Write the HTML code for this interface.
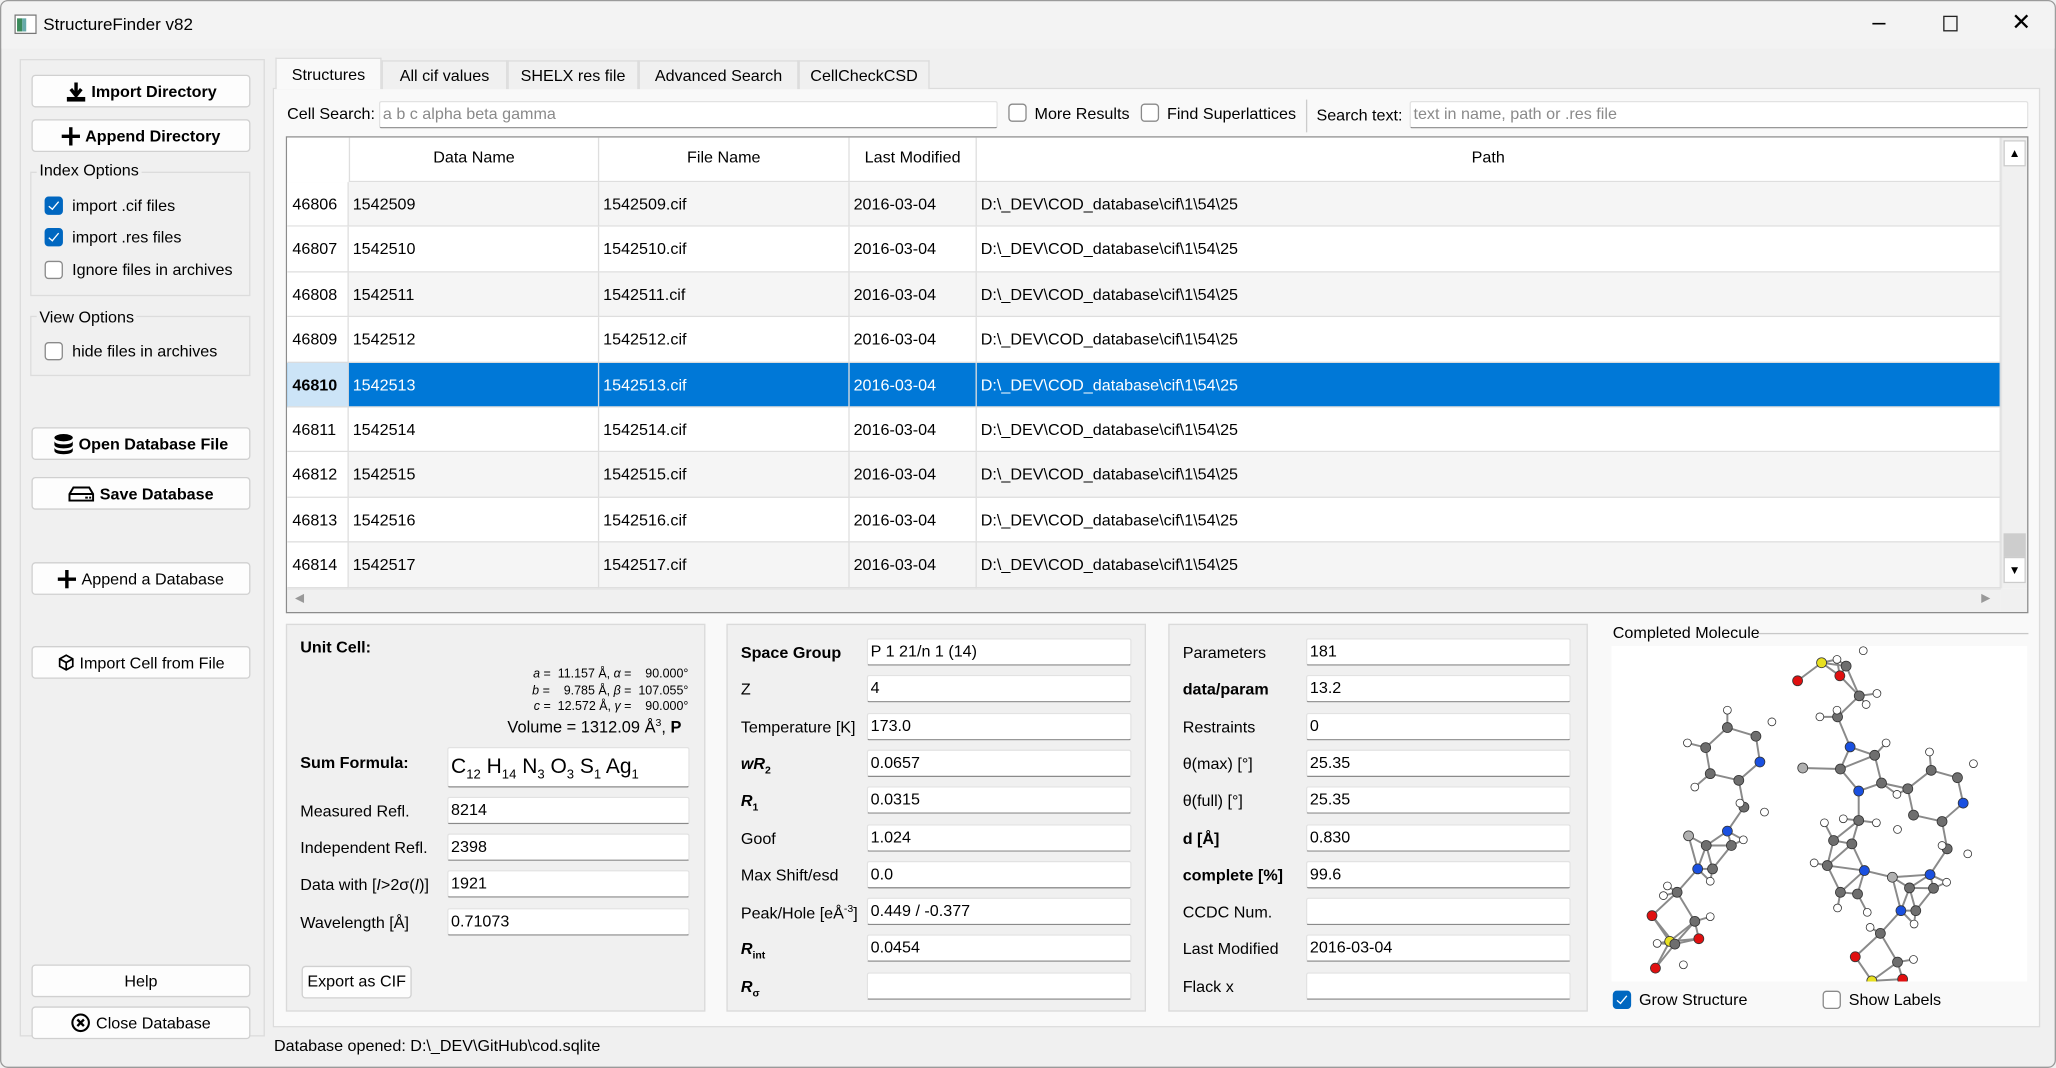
<!DOCTYPE html>
<html><head><meta charset="utf-8">
<style>
*{box-sizing:border-box;margin:0;padding:0}
html,body{width:2056px;height:1068px;overflow:hidden;background:#f0f0f0}
#w{position:absolute;left:0;top:0;width:1568px;height:815px;transform:scale(1.3112,1.3104);transform-origin:0 0;font-family:"Liberation Sans","DejaVu Sans",sans-serif;font-size:12.3px;color:#000;background:#f0f0f0;border:1px solid #9a9a9a;border-radius:6px;overflow:hidden}
.a{position:absolute}
.title{left:0;top:0;width:1568px;height:36px;background:#f3f3f3}
.btn{position:absolute;left:23px;width:167px;height:25px;background:#fdfdfd;border:1px solid #d0d0d0;border-radius:3px;display:flex;align-items:center;justify-content:center;gap:4px;font-size:12.3px}
.btn b{font-weight:bold}
.grp{position:absolute;border:1px solid #dcdcdc}
.gt{position:absolute;background:#f0f0f0;padding:0 2px;font-size:12.3px}
.cb{position:absolute;width:14px;height:14px;border:1px solid #8a8a8a;border-radius:3px;background:#fff}
.cb.on{background:#0067c0;border-color:#0067c0}
.cb.on:after{content:"";position:absolute;left:4px;top:1px;width:3px;height:7px;border:solid #fff;border-width:0 1px 1px 0;transform:rotate(40deg)}
.lbl{position:absolute;white-space:nowrap}
.tab{position:absolute;top:45px;height:22px;border:1px solid #dcdcdc;border-bottom:none;background:#f0f0f0;display:flex;align-items:center;justify-content:center}
.inp{position:absolute;background:#fff;border:1px solid #e2e2e2;border-bottom:1px solid #8a8a8a;border-radius:2px;height:21px;padding-left:2px;line-height:19px;white-space:nowrap}
.ph{color:#8a8a8a}
.row{position:absolute;left:0;width:1307px;height:34.4px}
.cell{position:absolute;top:0;height:100%;line-height:34px;white-space:nowrap;border-right:1px solid #dedede;border-bottom:1px solid #dedede;padding-left:3px}
.box{position:absolute;border:1px solid #dadada;background:#f0f0f0}
.fl{position:absolute;white-space:nowrap}
</style></head><body>
<div id="w">
<div class="a title"></div>
<svg class="a" style="left:10px;top:10px" width="17" height="15"><rect x="0.5" y="0.5" width="16" height="14" fill="#fff" stroke="#777"/><rect x="2" y="3" width="4" height="10" fill="#3a8a5a"/><rect x="6" y="3" width="3" height="10" fill="#6aa"/></svg>
<div class="lbl" style="left:32px;top:10px;font-size:13px">StructureFinder v82</div>
<div class="lbl" style="left:1427px;top:6px;font-size:18px">–</div>
<div class="a" style="left:1481px;top:11px;width:11px;height:12px;border:1px solid #222"></div>
<div class="lbl" style="left:1533px;top:6px;font-size:18px">✕</div>

<div class="a" style="left:14px;top:44px;width:187px;height:746px;border:1px solid #dcdcdc"></div>
<div class="btn" style="top:56px"><svg width="16" height="16"><path d="M8 1v9M4 6l4 5 4-5" stroke="#000" stroke-width="2.6" fill="none"/><rect x="1" y="12" width="14" height="3.5" fill="#000"/></svg><b>Import Directory</b></div>
<div class="btn" style="top:90px"><svg width="14" height="14"><path d="M7 0v14M0 7h14" stroke="#000" stroke-width="2.6"/></svg><b>Append Directory</b></div>
<div class="grp" style="left:22px;top:130px;width:168px;height:95px"></div>
<div class="gt" style="left:27px;top:122px">Index Options</div>
<div class="cb on" style="left:33px;top:149px"></div><div class="lbl" style="left:54px;top:149px">import .cif files</div>
<div class="cb on" style="left:33px;top:173px"></div><div class="lbl" style="left:54px;top:173px">import .res files</div>
<div class="cb" style="left:33px;top:198px"></div><div class="lbl" style="left:54px;top:198px">Ignore files in archives</div>
<div class="grp" style="left:22px;top:240px;width:168px;height:46px"></div>
<div class="gt" style="left:27px;top:234px">View Options</div>
<div class="cb" style="left:33px;top:260px"></div><div class="lbl" style="left:54px;top:260px">hide files in archives</div>
<div class="btn" style="top:325px"><svg width="15" height="16"><ellipse cx="7.5" cy="3" rx="7" ry="2.8" fill="#000"/><path d="M0.5 5.5c0 3.5 14 3.5 14 0v3c0 3.5-14 3.5-14 0zM0.5 10.5c0 3.5 14 3.5 14 0v2.5c0 3.5-14 3.5-14 0z" fill="#000"/></svg><b>Open Database File</b></div>
<div class="btn" style="top:363px"><svg width="20" height="14"><path d="M1 7l3-5h12l3 5v5H1z" fill="none" stroke="#000" stroke-width="1.5"/><path d="M1 7h18" stroke="#000" stroke-width="1.5"/><rect x="13" y="9" width="2" height="1.5"/><rect x="16" y="9" width="1.5" height="1.5"/></svg><b>Save Database</b></div>
<div class="btn" style="top:428px"><svg width="14" height="14"><path d="M7 0v14M0 7h14" stroke="#000" stroke-width="2.6"/></svg>Append a Database</div>
<div class="btn" style="top:492px"><svg width="13" height="13"><path d="M6.5 1l5 2.8v5.6l-5 2.8-5-2.8V3.8zM1.5 3.8l5 2.8 5-2.8M6.5 6.6v5.6" fill="none" stroke="#000" stroke-width="1.3"/></svg>Import Cell from File</div>
<div class="btn" style="top:735px">Help</div>
<div class="btn" style="top:767px"><svg width="15" height="15"><circle cx="7.5" cy="7.5" r="6.3" fill="none" stroke="#000" stroke-width="1.6"/><path d="M5 5l5 5M10 5l-5 5" stroke="#000" stroke-width="1.8"/></svg>Close Database</div>

<div class="a" style="left:207px;top:66px;width:1348px;height:717px;border:1px solid #dcdcdc;background:#f9f9f9"></div>
<div class="tab" style="left:209px;width:81px;top:43px;height:24px;background:#f9f9f9;z-index:2">Structures</div>
<div class="tab" style="left:290px;width:96px">All cif values</div>
<div class="tab" style="left:386px;width:100px">SHELX res file</div>
<div class="tab" style="left:486px;width:122px">Advanced Search</div>
<div class="tab" style="left:608px;width:100px">CellCheckCSD</div>

<div class="lbl" style="left:218px;top:79px">Cell Search:</div>
<div class="inp" style="left:288px;top:76px;width:472px"><span class="ph">a b c alpha beta gamma</span></div>
<div class="cb" style="left:768px;top:78px"></div><div class="lbl" style="left:788px;top:79px">More Results</div>
<div class="cb" style="left:869px;top:78px"></div><div class="lbl" style="left:889px;top:79px">Find Superlattices</div>
<div class="a" style="left:995px;top:75px;width:1px;height:25px;background:#ccc"></div>
<div class="lbl" style="left:1003px;top:80px">Search text:</div>
<div class="inp" style="left:1074px;top:76px;width:472px"><span class="ph">text in name, path or .res file</span></div>

<div class="a" style="left:217px;top:103px;width:1329px;height:364px;border:1px solid #8c8c8c;background:#fff;overflow:hidden">
 <div class="a" style="left:0;top:0;width:48px;height:344px;background:#fff"></div>
 <div class="row" style="top:0;height:34px;background:#fff">
  <div class="cell" style="left:47px;width:191px;text-align:center;padding:0;border-left:1px solid #dedede;line-height:30px">Data Name</div>
  <div class="cell" style="left:238px;width:191px;text-align:center;padding:0;line-height:30px">File Name</div>
  <div class="cell" style="left:429px;width:97px;text-align:center;padding:0;line-height:30px">Last Modified</div>
  <div class="cell" style="left:526px;width:781px;text-align:center;padding:0;line-height:30px">Path</div>
 </div>
 <div id="rows"></div>
 <div class="a" style="left:1307px;top:0;width:20px;height:344px;background:#f0f0f0;border-left:1px solid #e5e5e5"></div>
 <div class="a" style="left:1309px;top:2px;width:17px;height:20px;background:#fff;border:1px solid #ccc;text-align:center;font-size:9px;line-height:18px">▲</div>
 <div class="a" style="left:1309px;top:320px;width:17px;height:20px;background:#fff;border:1px solid #ccc;text-align:center;font-size:9px;line-height:18px">▼</div>
 <div class="a" style="left:1309px;top:302px;width:17px;height:18px;background:#cdcdcd"></div>
 <div class="a" style="left:0;top:344px;width:1307px;height:18px;background:#f0f0f0;border-top:1px solid #e5e5e5"></div>
 <div class="lbl" style="left:6px;top:346px;font-size:9px;color:#999">◀</div>
 <div class="lbl" style="left:1292px;top:346px;font-size:9px;color:#999">▶</div>
 <div class="a" style="left:1307px;top:344px;width:20px;height:18px;background:#f0f0f0"></div>
</div>

<div class="box" style="left:217px;top:475px;width:320px;height:296px"></div>
<div class="fl" style="left:228px;top:486px;font-weight:bold">Unit Cell:</div>
<div class="fl" style="left:360px;top:508px;font-size:9.5px;text-align:right;width:164px;line-height:12.6px"><i>a</i> = &nbsp;11.157 Å, <i>α</i> = &nbsp;&nbsp;&nbsp;90.000°<br><i>b</i> = &nbsp;&nbsp;&nbsp;9.785 Å, <i>β</i> = &nbsp;107.055°<br><i>c</i> = &nbsp;12.572 Å, <i>γ</i> = &nbsp;&nbsp;&nbsp;90.000°</div>
<div class="fl" style="left:386px;top:546px;font-size:12.5px">Volume = 1312.09 Å<sup style="font-size:8px">3</sup>, <b>P</b></div>
<div class="fl" style="left:228px;top:574px;font-weight:bold">Sum Formula:</div>
<div class="inp" style="left:340px;top:569px;width:185px;height:31px;line-height:29px;font-size:16px">C<sub style="font-size:10px">12</sub> H<sub style="font-size:10px">14</sub> N<sub style="font-size:10px">3</sub> O<sub style="font-size:10px">3</sub> S<sub style="font-size:10px">1</sub> Ag<sub style="font-size:10px">1</sub></div>
<div class="fl" style="left:228px;top:611px">Measured Refl.</div><div class="inp" style="left:340px;top:607px;width:185px">8214</div>
<div class="fl" style="left:228px;top:639px">Independent Refl.</div><div class="inp" style="left:340px;top:635px;width:185px">2398</div>
<div class="fl" style="left:228px;top:667px">Data with [<i>I</i>&gt;2σ(<i>I</i>)]</div><div class="inp" style="left:340px;top:663px;width:185px">1921</div>
<div class="fl" style="left:228px;top:696px">Wavelength [Å]</div><div class="inp" style="left:340px;top:692px;width:185px">0.71073</div>
<div class="a" style="left:229px;top:736px;width:84px;height:25px;background:#fdfdfd;border:1px solid #d0d0d0;border-radius:3px;text-align:center;line-height:23px">Export as CIF</div>

<div class="box" style="left:553px;top:475px;width:320px;height:296px"></div>
<div id="mid"></div>
<div class="box" style="left:890px;top:475px;width:320px;height:296px"></div>
<div id="rgt"></div>

<div class="fl" style="left:1229px;top:475px">Completed Molecule</div>
<div class="a" style="left:1340px;top:482px;width:206px;height:1px;background:#c8c8c8"></div>
<div class="a" style="left:1228px;top:492px;width:317px;height:256px;background:#fff;overflow:hidden">
<svg width="317" height="256" id="mol"></svg>
</div>
<div class="cb on" style="left:1229px;top:755px"></div><div class="lbl" style="left:1249px;top:755px">Grow Structure</div>
<div class="cb" style="left:1389px;top:755px"></div><div class="lbl" style="left:1409px;top:755px">Show Labels</div>

<div class="fl" style="left:208px;top:790px">Database opened: D:\_DEV\GitHub\cod.sqlite</div>
</div>
<script>
var r=document.getElementById('rows'),h='';
for(var i=0;i<9;i++){var n=46806+i,d=1542509+i,sel=i==4,t=34+i*34.4;
var bg=sel?'#0078d7':(i%2==0?'#f5f5f5':'#fff'),c=sel?'#fff':'#000';
h+='<div class="row" style="top:'+t+'px;background:'+bg+';color:'+c+'">'+
'<div class="cell" style="left:0;width:47px;background:'+(sel?'#cce4f7':'#fff')+';color:#000;'+(sel?'font-weight:bold;':'')+'padding-left:4px">'+n+'</div>'+
'<div class="cell" style="left:47px;width:191px">'+d+'</div>'+
'<div class="cell" style="left:238px;width:191px">'+d+'.cif</div>'+
'<div class="cell" style="left:429px;width:97px">2016-03-04</div>'+
'<div class="cell" style="left:526px;width:781px">D:\\_DEV\\COD_database\\cif\\1\\54\\25</div></div>';}
r.innerHTML=h;
function fields(id,x,vx,arr){var s='';arr.forEach(function(a,i){var y=486+i*28.3;
s+='<div class="fl" style="left:'+x+'px;top:'+(y+4)+'px;'+(a[2]?'font-weight:bold':'')+'">'+a[0]+'</div><div class="inp" style="left:'+vx+'px;top:'+y+'px;width:202px">'+a[1]+'</div>';});
document.getElementById(id).innerHTML=s;}
fields('mid',564,660,[['Space Group','P 1 21/n 1 (14)',1],['Z','4'],['Temperature [K]','173.0'],['<b><i>wR</i><sub style="font-size:8px">2</sub></b>','0.0657'],['<b><i>R</i><sub style="font-size:8px">1</sub></b>','0.0315'],['Goof','1.024'],['Max Shift/esd','0.0'],['Peak/Hole [eÅ<sup style="font-size:8px">-3</sup>]','0.449 / -0.377'],['<b><i>R</i><sub style="font-size:8px">int</sub></b>','0.0454'],['<b><i>R</i><sub style="font-size:8px">σ</sub></b>','']]);
fields('rgt',901,995,[['Parameters','181'],['data/param','13.2',1],['Restraints','0'],['θ(max) [°]','25.35'],['θ(full) [°]','25.35'],['d [Å]','0.830',1],['complete [%]','99.6',1],['CCDC Num.',''],['Last Modified','2016-03-04'],['Flack x','']]);
var Z=[[1155,158,'y'],[1182,148,'w'],[1198,168,'g'],[1228,122,'w'],[1113,212,'r'],[1187,197,'r'],[1221,257,'g'],[1252,250,'w'],[1233,283,'w'],[1183,320,'g'],[1152,320,'w'],[1182,300,'w'],
[990,352,'g'],[990,300,'w'],[1040,378,'g'],[1068,335,'w'],[952,412,'g'],[920,398,'w'],[1047,455,'b'],[960,490,'g'],[933,530,'w'],[1010,510,'g'],[1122,473,'l'],[1188,476,'g'],[1205,410,'b'],[1248,435,'g'],[1268,398,'w'],[1260,518,'g'],[1220,542,'b'],[1019,590,'g'],[1012,578,'w'],[1055,605,'w'],
[1306,535,'g'],[1287,552,'w'],[1347,480,'g'],[1344,425,'w'],[1393,502,'g'],[1421,460,'w'],[1403,578,'b'],[1366,633,'g'],[1316,614,'g'],[1288,657,'w'],[1375,715,'g'],[1366,705,'w'],[1411,730,'w'],[1345,792,'b'],[1309,832,'g'],[1279,800,'l'],[1351,833,'g'],[1374,815,'w'],[1294,900,'b'],[1320,900,'g'],[1317,940,'w'],[1258,968,'g'],[1240,950,'w'],[1288,1054,'g'],[1316,1046,'w'],[1214,1038,'r'],[1243,1110,'y'],[1297,1105,'r'],
[1220,630,'g'],[1193,625,'w'],[1251,637,'w'],[1208,700,'g'],[1176,690,'g'],[1160,637,'w'],[1165,765,'g'],[1142,757,'w'],[1230,780,'b'],[1188,845,'g'],[1218,850,'g'],[1183,892,'w'],[1235,905,'w'],
[990,662,'b'],[953,705,'g'],[922,676,'l'],[997,705,'g'],[1018,688,'w'],[938,775,'b'],[964,775,'g'],[960,812,'w'],[902,845,'g'],[885,826,'w'],[878,855,'w'],[933,932,'g'],[960,918,'w'],[889,992,'y'],[858,915,'r'],[940,984,'r'],[864,1072,'r'],[913,1062,'w'],[867,998,'w'],[898,1000,'g']];
var A=Z.map(function(z){return [(z[0]-787)/728*317,(z[1]-108)/1004*256,z[2]];});
var col={y:'#e8e020',w:'#fff',r:'#e01010',g:'#6e6e6e',b:'#1a50e0',l:'#b0b0b0'};
var s='';
for(var i=0;i<A.length;i++)for(var j=i+1;j<A.length;j++){var dx=A[i][0]-A[j][0],dy=A[i][1]-A[j][1],dd=Math.sqrt(dx*dx+dy*dy);
var hh=(A[i][2]=='w'||A[j][2]=='w');if(A[i][2]=='w'&&A[j][2]=='w')continue;if(dd<(hh?16:29))s+='<line x1="'+A[i][0]+'" y1="'+A[i][1]+'" x2="'+A[j][0]+'" y2="'+A[j][1]+'" stroke="#8a8a8a" stroke-width="1.5"/>';}
A.forEach(function(a){var rr=a[2]=='w'?3:3.8;s+='<circle cx="'+a[0]+'" cy="'+a[1]+'" r="'+rr+'" fill="'+col[a[2]]+'" stroke="#333" stroke-width="0.6"/>';});
document.getElementById('mol').innerHTML=s;
</script>
</body></html>
